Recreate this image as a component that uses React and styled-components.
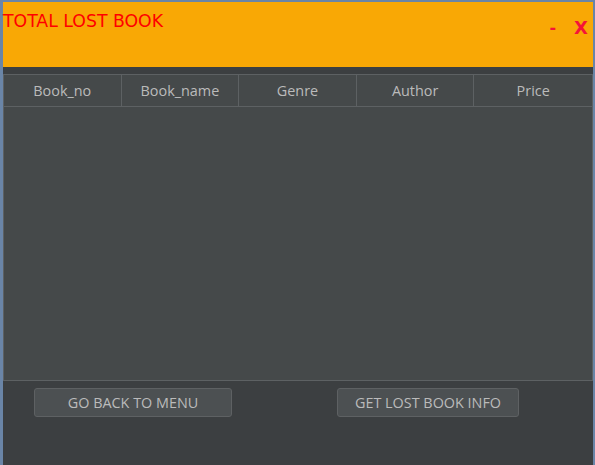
import React from "react";
import styled, { createGlobalStyle } from "styled-components";

const Global = createGlobalStyle`
  html, body { margin: 0; padding: 0; background: #3c3f41; }
  #root { width: 595px; height: 465px; }
`;

const Window = styled.div`
  box-sizing: border-box;
  width: 595px;
  height: 465px;
  border-left: 3px solid #6a85a7;
  border-right: 2px solid #6a85a7;
  border-top: 2px solid #6a85a7;
  background: #3c3f41;
  display: flex;
  flex-direction: column;
`;

const TitleBar = styled.div`
  height: 65px;
  background: #f9a805;
  display: flex;
  justify-content: space-between;
  align-items: flex-start;
  flex-shrink: 0;
`;

const Title = styled.div`
  font-family: "DejaVu Sans", sans-serif;
  font-size: 17.3px;
  line-height: 20px;
  color: #ff0000;
  padding-top: 9px;
`;

const Controls = styled.div`
  display: flex;
  align-items: center;
  gap: 18px;
  padding-top: 14px;
  padding-right: 5px;
`;

const Ctrl = styled.span`
  font-family: "DejaVu Sans", sans-serif;
  font-weight: bold;
  font-size: ${(p) => p.$size}px;
  line-height: 24px;
  color: #f51438;
`;

const Gap = styled.div`
  height: 7px;
  flex-shrink: 0;
`;

const Table = styled.div`
  flex: 0 0 307px;
  box-sizing: border-box;
  border: 1px solid #5d6163;
  background: #45494a;
  display: flex;
  flex-direction: column;
`;

const HeadRow = styled.div`
  display: grid;
  grid-template-columns: repeat(5, 1fr);
  height: 31px;
  border-bottom: 1px solid #5d6163;
`;

const HeadCell = styled.div`
  display: flex;
  align-items: center;
  justify-content: center;
  font-family: "Open Sans", sans-serif;
  font-size: 14.4px;
  color: #bbbbbb;
  border-right: ${(p) => (p.$last ? "none" : "1px solid #5d6163")};
`;

const Footer = styled.div`
  flex: 1;
  display: flex;
  align-items: flex-start;
  padding-top: 7px;
  padding-left: 31px;
`;

const Button = styled.button`
  box-sizing: border-box;
  width: ${(p) => p.$w}px;
  height: 29px;
  margin-right: ${(p) => p.$mr || 0}px;
  background: #4c5052;
  border: 1px solid #5e6163;
  border-radius: 3px;
  color: #bbbbbb;
  font-family: "Open Sans", sans-serif;
  font-size: 14.4px;
  padding: 0;
  cursor: pointer;
`;

const cols = ["Book_no", "Book_name", "Genre", "Author", "Price"];

export default function App() {
  return (
    <>
      <Global />
      <Window>
        <TitleBar>
          <Title>TOTAL LOST BOOK</Title>
          <Controls>
            <Ctrl $size={16}>-</Ctrl>
            <Ctrl $size={18}>X</Ctrl>
          </Controls>
        </TitleBar>
        <Gap />
        <Table>
          <HeadRow>
            {cols.map((c, i) => (
              <HeadCell key={c} $last={i === cols.length - 1}>
                {c}
              </HeadCell>
            ))}
          </HeadRow>
        </Table>
        <Footer>
          <Button $w={198} $mr={105}>GO BACK TO MENU</Button>
          <Button $w={182}>GET LOST BOOK INFO</Button>
        </Footer>
      </Window>
    </>
  );
}
